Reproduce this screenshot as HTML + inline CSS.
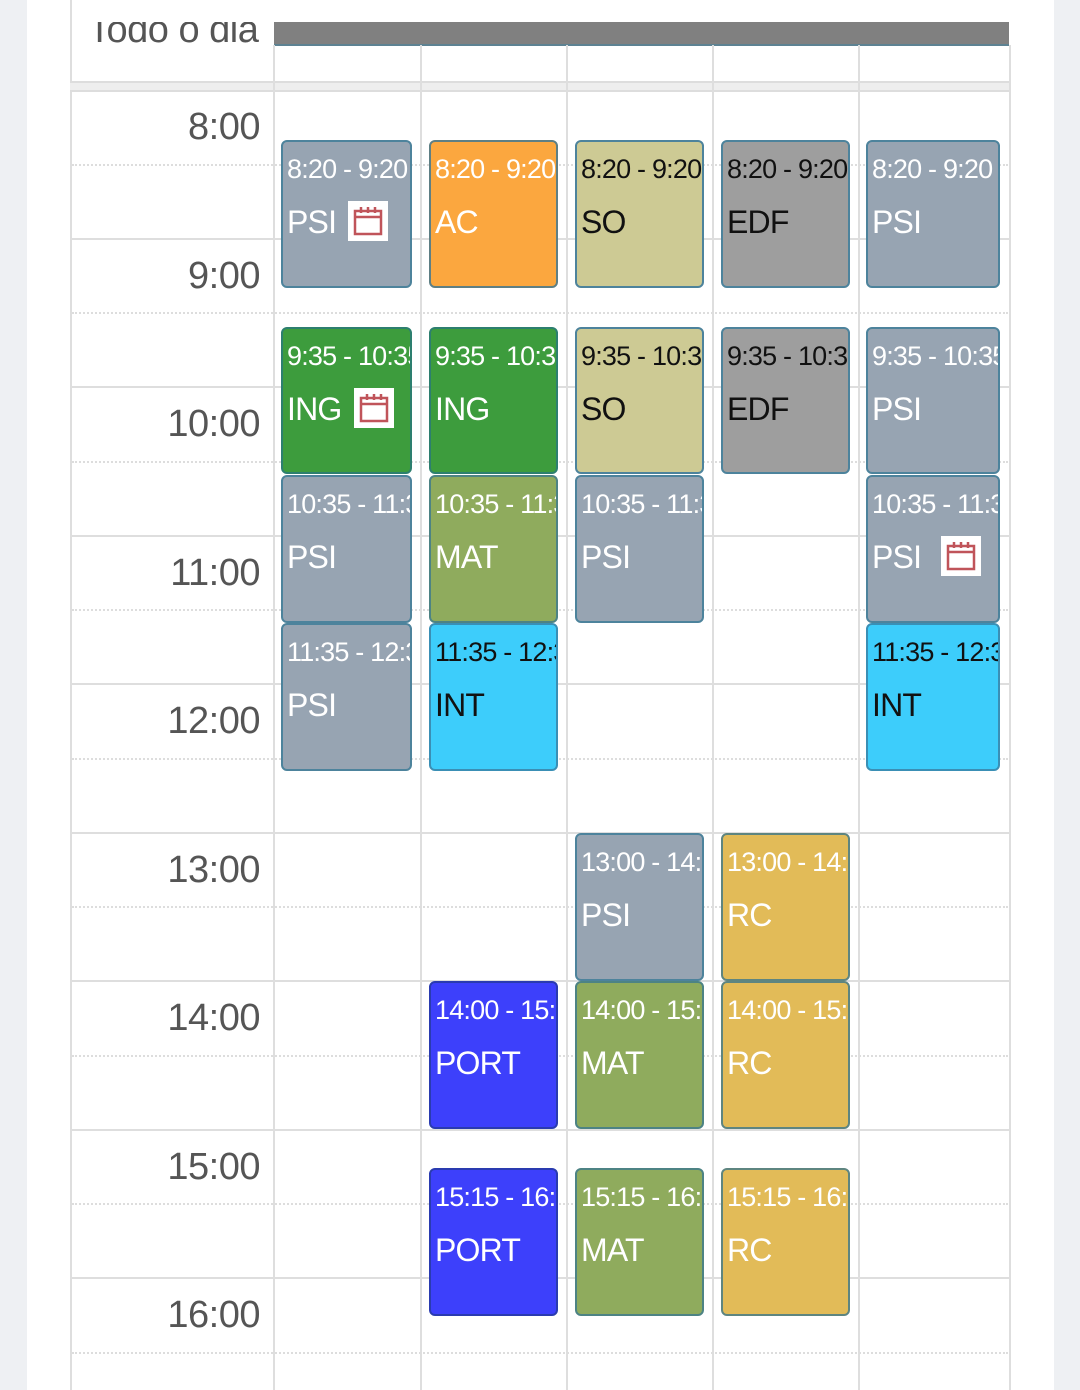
<!DOCTYPE html>
<html><head><meta charset="utf-8"><style>
*{margin:0;padding:0;box-sizing:border-box}
body{width:1080px;height:1390px;background:#eef0f3;position:relative;overflow:hidden;font-family:"Liberation Sans",sans-serif}
.page{position:absolute;left:27px;top:0;width:1027px;height:1390px;background:#fff}
.a{position:absolute}
.hl{position:absolute;left:70px;width:940px;height:2px;background:#dedede}
.dl{position:absolute;left:72px;width:936px;border-top:2px dotted #ddd}
.vl{position:absolute;top:45px;bottom:0;width:2px;background:#dedede}
.t{position:absolute;left:80px;width:180px;text-align:right;font-size:38px;color:#555;line-height:40px;letter-spacing:-0.5px}
.e{position:absolute;border:2px solid #4d839c;border-radius:6px;overflow:hidden;white-space:nowrap;color:#fff;padding-left:4px}
.e .tm{position:absolute;top:12px;left:4px;font-size:27px;line-height:30px;letter-spacing:-0.8px}
.e .ti{position:absolute;top:62px;left:4px;font-size:32px;line-height:36px;letter-spacing:-0.8px}
.k{color:#111}
.ic{display:inline-block;width:40px;height:40px;background:#fff;vertical-align:middle;margin-left:12px;margin-top:-8px;position:relative}
.ic svg{position:absolute;left:4px;top:4px}
</style></head><body>
<div class="page"></div>
<div class="a" style="left:70px;top:0;width:2px;height:1390px;background:#dedede"></div>
<div class="a" style="left:80px;top:22px;width:190px;height:40px;overflow:hidden"><div class="a" style="left:8px;top:-12px;font-size:38px;color:#555;line-height:40px;letter-spacing:-0.5px;white-space:nowrap">Todo o dia</div></div>
<div class="a" style="left:274px;top:22px;width:735px;height:24px;background:#808080;border-bottom:2px solid #5d8292"></div>
<div class="a" style="left:70px;top:81px;width:940px;height:11px;background:#eee;border-top:2px solid #ddd;border-bottom:2px solid #ddd"></div>
<div class="vl" style="left:273px"></div>
<div class="vl" style="left:420px"></div>
<div class="vl" style="left:566px"></div>
<div class="vl" style="left:712px"></div>
<div class="vl" style="left:858px"></div>
<div class="vl" style="left:1009px"></div>

<div class="hl" style="top:238px"></div><div class="hl" style="top:386px"></div><div class="hl" style="top:535px"></div><div class="hl" style="top:683px"></div><div class="hl" style="top:832px"></div><div class="hl" style="top:980px"></div><div class="hl" style="top:1129px"></div><div class="hl" style="top:1277px"></div>
<div class="dl" style="top:164px"></div><div class="dl" style="top:312px"></div><div class="dl" style="top:461px"></div><div class="dl" style="top:609px"></div><div class="dl" style="top:758px"></div><div class="dl" style="top:906px"></div><div class="dl" style="top:1055px"></div><div class="dl" style="top:1203px"></div><div class="dl" style="top:1352px"></div>

<div class="t" style="top:107px">8:00</div>
<div class="t" style="top:256px">9:00</div>
<div class="t" style="top:404px">10:00</div>
<div class="t" style="top:553px">11:00</div>
<div class="t" style="top:701px">12:00</div>
<div class="t" style="top:850px">13:00</div>
<div class="t" style="top:998px">14:00</div>
<div class="t" style="top:1147px">15:00</div>
<div class="t" style="top:1295px">16:00</div>

<div class="e" style="left:281px;top:140px;width:131px;height:148px;background:#97a4b2"><div class="tm">8:20 - 9:20</div><div class="ti">PSI<span class="ic"><svg width="32" height="32" viewBox="0 0 32 32" fill="none" stroke="#c0545a" stroke-width="2.5"><rect x="3" y="6" width="26" height="23"/><line x1="3" y1="12" x2="29" y2="12"/><line x1="9" y1="2" x2="9" y2="8"/><line x1="16" y1="2" x2="16" y2="8"/><line x1="23" y1="2" x2="23" y2="8"/></svg></span></div></div>
<div class="e" style="left:429px;top:140px;width:129px;height:148px;background:#fba73f;border-color:#5e7f84"><div class="tm">8:20 - 9:20</div><div class="ti">AC</div></div>
<div class="e k" style="left:575px;top:140px;width:129px;height:148px;background:#cdca94"><div class="tm">8:20 - 9:20</div><div class="ti">SO</div></div>
<div class="e k" style="left:721px;top:140px;width:129px;height:148px;background:#9e9e9e"><div class="tm">8:20 - 9:20</div><div class="ti">EDF</div></div>
<div class="e" style="left:866px;top:140px;width:134px;height:148px;background:#97a4b2"><div class="tm">8:20 - 9:20</div><div class="ti">PSI</div></div>

<div class="e" style="left:281px;top:327px;width:131px;height:147px;background:#3d9c3d;border-color:#2d7f6f"><div class="tm">9:35 - 10:35</div><div class="ti">ING<span class="ic"><svg width="32" height="32" viewBox="0 0 32 32" fill="none" stroke="#c0545a" stroke-width="2.5"><rect x="3" y="6" width="26" height="23"/><line x1="3" y1="12" x2="29" y2="12"/><line x1="9" y1="2" x2="9" y2="8"/><line x1="16" y1="2" x2="16" y2="8"/><line x1="23" y1="2" x2="23" y2="8"/></svg></span></div></div>
<div class="e" style="left:429px;top:327px;width:129px;height:147px;background:#3d9c3d;border-color:#2d7f6f"><div class="tm">9:35 - 10:35</div><div class="ti">ING</div></div>
<div class="e k" style="left:575px;top:327px;width:129px;height:147px;background:#cdca94"><div class="tm">9:35 - 10:35</div><div class="ti">SO</div></div>
<div class="e k" style="left:721px;top:327px;width:129px;height:147px;background:#9e9e9e"><div class="tm">9:35 - 10:35</div><div class="ti">EDF</div></div>
<div class="e" style="left:866px;top:327px;width:134px;height:147px;background:#97a4b2"><div class="tm">9:35 - 10:35</div><div class="ti">PSI</div></div>

<div class="e" style="left:281px;top:475px;width:131px;height:148px;background:#97a4b2"><div class="tm">10:35 - 11:35</div><div class="ti">PSI</div></div>
<div class="e" style="left:429px;top:475px;width:129px;height:148px;background:#8fab5d;border-color:#4d8384"><div class="tm">10:35 - 11:35</div><div class="ti">MAT</div></div>
<div class="e" style="left:575px;top:475px;width:129px;height:148px;background:#97a4b2"><div class="tm">10:35 - 11:35</div><div class="ti">PSI</div></div>
<div class="e" style="left:866px;top:475px;width:134px;height:148px;background:#97a4b2"><div class="tm">10:35 - 11:35</div><div class="ti">PSI<span class="ic" style="margin-left:20px"><svg width="32" height="32" viewBox="0 0 32 32" fill="none" stroke="#c0545a" stroke-width="2.5"><rect x="3" y="6" width="26" height="23"/><line x1="3" y1="12" x2="29" y2="12"/><line x1="9" y1="2" x2="9" y2="8"/><line x1="16" y1="2" x2="16" y2="8"/><line x1="23" y1="2" x2="23" y2="8"/></svg></span></div></div>

<div class="e" style="left:281px;top:623px;width:131px;height:148px;background:#97a4b2"><div class="tm">11:35 - 12:35</div><div class="ti">PSI</div></div>
<div class="e k" style="left:429px;top:623px;width:129px;height:148px;background:#3dcdfb;border-color:#3a8fb5"><div class="tm">11:35 - 12:35</div><div class="ti">INT</div></div>
<div class="e k" style="left:866px;top:623px;width:134px;height:148px;background:#3dcdfb;border-color:#3a8fb5"><div class="tm">11:35 - 12:35</div><div class="ti">INT</div></div>

<div class="e" style="left:575px;top:833px;width:129px;height:148px;background:#97a4b2"><div class="tm">13:00 - 14:00</div><div class="ti">PSI</div></div>
<div class="e" style="left:721px;top:833px;width:129px;height:148px;background:#e2bb58;border-color:#5e8580"><div class="tm">13:00 - 14:00</div><div class="ti">RC</div></div>

<div class="e" style="left:429px;top:981px;width:129px;height:148px;background:#3d40fb;border-color:#2a3bb0"><div class="tm">14:00 - 15:00</div><div class="ti">PORT</div></div>
<div class="e" style="left:575px;top:981px;width:129px;height:148px;background:#8fab5d;border-color:#4d8384"><div class="tm">14:00 - 15:00</div><div class="ti">MAT</div></div>
<div class="e" style="left:721px;top:981px;width:129px;height:148px;background:#e2bb58;border-color:#5e8580"><div class="tm">14:00 - 15:00</div><div class="ti">RC</div></div>

<div class="e" style="left:429px;top:1168px;width:129px;height:148px;background:#3d40fb;border-color:#2a3bb0"><div class="tm">15:15 - 16:15</div><div class="ti">PORT</div></div>
<div class="e" style="left:575px;top:1168px;width:129px;height:148px;background:#8fab5d;border-color:#4d8384"><div class="tm">15:15 - 16:15</div><div class="ti">MAT</div></div>
<div class="e" style="left:721px;top:1168px;width:129px;height:148px;background:#e2bb58;border-color:#5e8580"><div class="tm">15:15 - 16:15</div><div class="ti">RC</div></div>
</body></html>
